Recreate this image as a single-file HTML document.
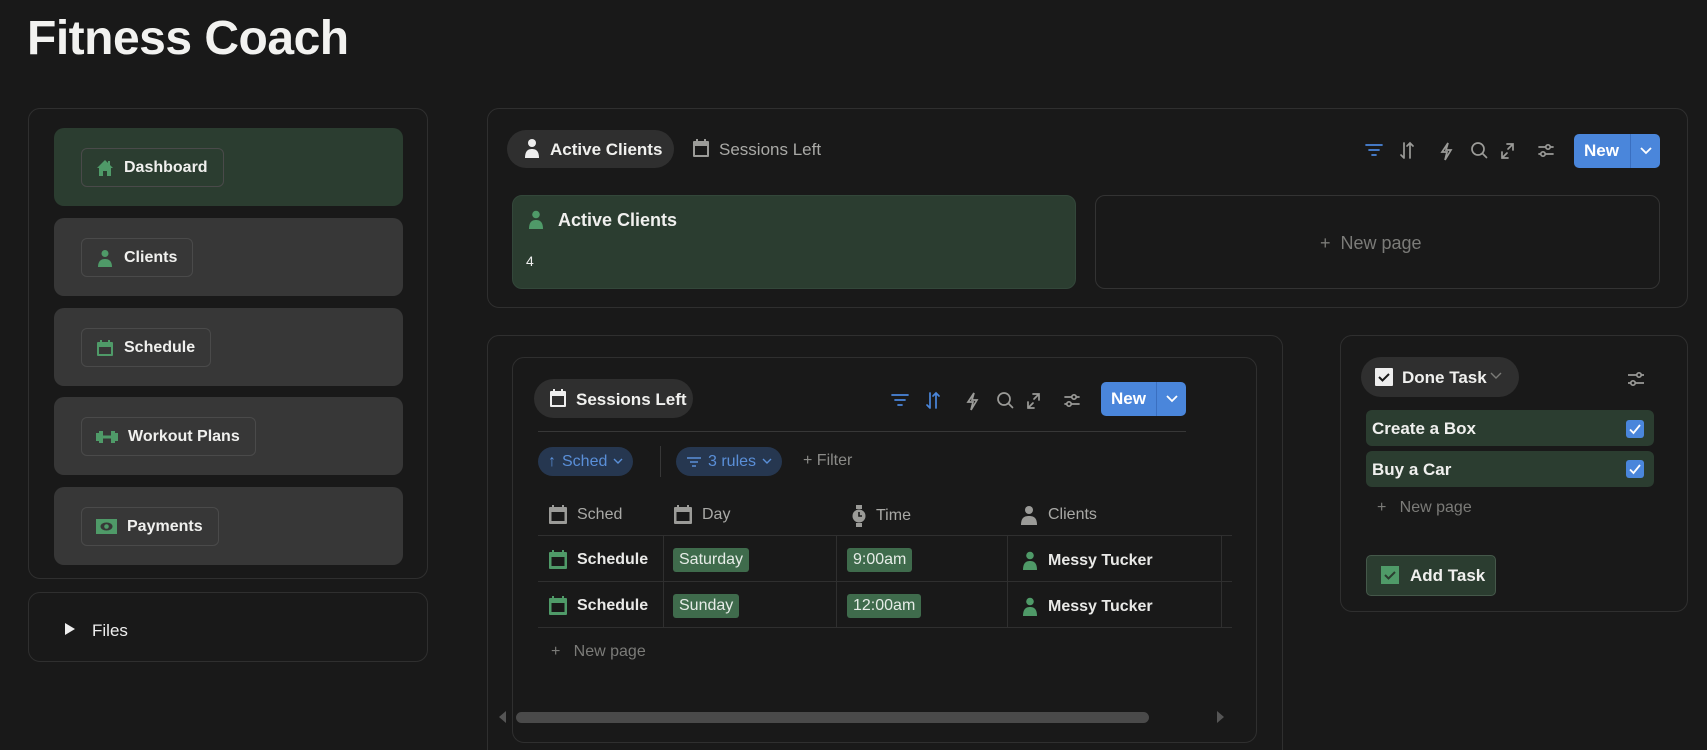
<!DOCTYPE html>
<html style="overflow:hidden;height:750px"><head><meta charset="utf-8"><style>
*{box-sizing:border-box;margin:0;padding:0}
body{width:1707px;height:750px;background:#191919;font-family:"Liberation Sans",sans-serif;color:#e9e9e7;position:relative;overflow:hidden}
#wrap{position:relative;width:1707px;height:750px;overflow:hidden}
.a{position:absolute}
.panel{position:absolute;border:1px solid #2f2f2f;border-radius:12px}
.nav{position:absolute;left:54px;width:349px;height:78px;background:#373737;border-radius:10px}
.nav.g{background:#2b3d30}
.pill{position:absolute;left:27px;top:20px;height:39px;border:1px solid #4a4a4a;border-radius:6px;display:flex;align-items:center;padding:0 15px 0 14px;font-weight:bold;font-size:16px;color:#f0f0ee;gap:10px}
.ic{display:inline-block}
.btn{position:absolute;background:#4a86db;border-radius:5px;color:#fff;font-weight:bold;font-size:17px;display:flex;align-items:center}
.chip{position:absolute;height:29px;border-radius:15px;background:#263750;color:#5a8fd8;font-size:16px;display:flex;align-items:center;padding:0 10px;gap:6px}
.tag{background:#3f6b4c;border-radius:3px;padding:3px 6px;font-size:16px;color:#e6ece7}
.th{position:absolute;top:505px;font-size:16px;color:#a9a9a6;display:flex;align-items:center;gap:10px}
.td{position:absolute;font-size:16px;display:flex;align-items:center;gap:10px}
</style></head><body><div id="wrap">
<div class="a" style="left:27px;top:11px;font-size:48px;font-weight:bold;color:#f2f2f0;letter-spacing:-0.5px">Fitness Coach</div>

<div class="panel" style="left:28px;top:108px;width:400px;height:471px"></div>
<div class="nav g" style="top:128px"><div class="pill"><svg class="ic" width="18" height="18" viewBox="0 0 18 18"><path d="M9 1L1 9h2v8h4v-5h4v5h4V9h2L9 1z" fill="#4f9a68"/><rect x="12" y="2" width="2" height="4" fill="#4f9a68"/></svg>Dashboard</div></div>
<div class="nav" style="top:218px"><div class="pill"><svg width="18" height="18" viewBox="0 0 18 18"><circle cx="9" cy="4.5" r="3.5" fill="#4f9a68"/><path d="M2 18c0-6 3-8 7-8s7 2 7 8z" fill="#4f9a68"/></svg>Clients</div></div>
<div class="nav" style="top:308px"><div class="pill"><svg width="18" height="18" viewBox="0 0 18 18"><rect x="1" y="3" width="16" height="14" rx="1" fill="#4f9a68"/><rect x="3" y="8" width="12" height="7" fill="#373737"/><rect x="4" y="1" width="2" height="3" fill="#4f9a68"/><rect x="12" y="1" width="2" height="3" fill="#4f9a68"/></svg>Schedule</div></div>
<div class="nav" style="top:397px"><div class="pill"><svg width="22" height="16" viewBox="0 0 22 16"><rect x="0" y="4" width="3" height="8" fill="#4f9a68"/><rect x="3" y="2" width="4" height="12" fill="#4f9a68"/><rect x="7" y="6.5" width="8" height="3" fill="#4f9a68"/><rect x="15" y="2" width="4" height="12" fill="#4f9a68"/><rect x="19" y="4" width="3" height="8" fill="#4f9a68"/></svg>Workout Plans</div></div>
<div class="nav" style="top:487px"><div class="pill"><svg width="21" height="15" viewBox="0 0 21 15"><rect x="0" y="0" width="21" height="15" fill="#4f9a68"/><ellipse cx="10.5" cy="7.5" rx="6" ry="4" fill="#373737"/><circle cx="10.5" cy="7.5" r="2.3" fill="#4f9a68"/></svg>Payments</div></div>

<div class="panel" style="left:28px;top:592px;width:400px;height:70px"></div>
<div class="a" style="left:65px;top:623px;width:0;height:0;border-left:10px solid #eee;border-top:6px solid transparent;border-bottom:6px solid transparent"></div>
<div class="a" style="left:92px;top:621px;font-size:17px;color:#eee">Files</div>

<div class="panel" style="left:487px;top:108px;width:1201px;height:200px"></div>
<div class="a" style="left:507px;top:130px;width:167px;height:38px;background:#2f2f2f;border-radius:19px"></div>
<svg class="a" style="left:523px;top:138px" width="18" height="20" viewBox="0 0 18 20"><circle cx="9" cy="5" r="4" fill="#eee"/><path d="M2 20c0-7 3-9 7-9s7 2 7 9z" fill="#eee"/></svg>
<div class="a" style="left:550px;top:140px;font-size:17px;font-weight:bold;color:#f0f0ee">Active Clients</div>
<svg class="a" style="left:692px;top:138px" width="18" height="20" viewBox="0 0 18 20"><rect x="1" y="3" width="16" height="16" rx="1" fill="#9b9b98"/><rect x="3" y="8" width="12" height="9" fill="#191919"/><rect x="4" y="1" width="2" height="3" fill="#9b9b98"/><rect x="12" y="1" width="2" height="3" fill="#9b9b98"/></svg>
<div class="a" style="left:719px;top:140px;font-size:17px;color:#a9a9a6">Sessions Left</div>

<svg class="a" style="left:1364px;top:140px" width="200" height="22" viewBox="0 0 200 22" fill="none" stroke-width="1.7" stroke-linecap="round">
<g stroke="#4a86db"><path d="M2 5h16M5 10h10M8 15h4"/></g>
<g stroke="#9b9b98"><path d="M40 3v15M37 15l3 3M43 6l3-3 3 3M46 3v15"/><path d="M84 3l-6 9h5l-2 8 6-10h-5z"/><circle cx="114" cy="9" r="6"/><path d="M118.5 13.5l4 4"/><path d="M143 4h6v6M149 4l-5 5M143 13l-5 5M138 12v6h6"/><path d="M175 7h14M175 14h14"/><circle cx="184" cy="7" r="2.2" fill="#191919"/><circle cx="179" cy="14" r="2.2" fill="#191919"/></g>
</svg>
<div class="btn" style="left:1574px;top:134px;width:86px;height:34px"><span style="padding-left:10px;width:56px">New</span><span style="border-left:1px solid #3a6fc0;height:34px;width:30px;display:flex;align-items:center;justify-content:center"><svg width="12" height="8" viewBox="0 0 12 8"><path d="M1 1l5 5 5-5" stroke="#fff" stroke-width="1.8" fill="none"/></svg></span></div>

<div class="a" style="left:512px;top:195px;width:564px;height:94px;background:#2b3d30;border:1px solid #33473a;border-radius:10px"></div>
<svg class="a" style="left:528px;top:210px" width="16" height="19" viewBox="0 0 16 19"><circle cx="8" cy="4.5" r="3.8" fill="#4f9a68"/><path d="M1 19c0-7 3-9 7-9s7 2 7 9z" fill="#4f9a68"/></svg>
<div class="a" style="left:558px;top:210px;font-size:18px;font-weight:bold;color:#f0f0ee">Active Clients</div>
<div class="a" style="left:526px;top:253px;font-size:14px;color:#eee">4</div>
<div class="a" style="left:1095px;top:195px;width:565px;height:94px;border:1px solid #333;border-radius:10px"></div>
<div class="a" style="left:1320px;top:233px;font-size:18px;color:#7b7b78">+&nbsp;&nbsp;New page</div>

<div class="panel" style="left:487px;top:335px;width:796px;height:430px"></div>
<div class="panel" style="left:512px;top:357px;width:745px;height:386px"></div>
<div class="a" style="left:534px;top:379px;width:159px;height:39px;background:#2f2f2f;border-radius:20px"></div>
<svg class="a" style="left:549px;top:388px" width="18" height="20" viewBox="0 0 18 20"><rect x="1" y="3" width="16" height="16" rx="1" fill="#eee"/><rect x="3" y="8" width="12" height="9" fill="#2f2f2f"/><rect x="4" y="1" width="2" height="3" fill="#eee"/><rect x="12" y="1" width="2" height="3" fill="#eee"/></svg>
<div class="a" style="left:576px;top:390px;font-size:17px;font-weight:bold;color:#f0f0ee">Sessions Left</div>
<svg class="a" style="left:890px;top:390px" width="200" height="22" viewBox="0 0 200 22" fill="none" stroke-width="1.7" stroke-linecap="round">
<g stroke="#4a86db"><path d="M2 5h16M5 10h10M8 15h4"/><path d="M40 3v15M37 15l3 3M43 6l3-3 3 3M46 3v15"/></g>
<g stroke="#9b9b98"><path d="M84 3l-6 9h5l-2 8 6-10h-5z"/><circle cx="114" cy="9" r="6"/><path d="M118.5 13.5l4 4"/><path d="M143 4h6v6M149 4l-5 5M143 13l-5 5M138 12v6h6"/><path d="M175 7h14M175 14h14"/><circle cx="184" cy="7" r="2.2" fill="#191919"/><circle cx="179" cy="14" r="2.2" fill="#191919"/></g>
</svg>
<div class="btn" style="left:1101px;top:382px;width:85px;height:34px"><span style="padding-left:10px;width:55px">New</span><span style="border-left:1px solid #3a6fc0;height:34px;width:30px;display:flex;align-items:center;justify-content:center"><svg width="12" height="8" viewBox="0 0 12 8"><path d="M1 1l5 5 5-5" stroke="#fff" stroke-width="1.8" fill="none"/></svg></span></div>
<div class="a" style="left:538px;top:431px;width:648px;height:1px;background:#373737"></div>

<div class="chip" style="left:538px;top:447px"><span>↑</span>Sched<svg width="10" height="7" viewBox="0 0 10 7"><path d="M1 1l4 4 4-4" stroke="#5a8fd8" stroke-width="1.4" fill="none"/></svg></div>
<div class="a" style="left:660px;top:446px;width:1px;height:31px;background:#373737"></div>
<div class="chip" style="left:676px;top:447px"><svg width="16" height="12" viewBox="0 0 16 12"><path d="M1 2h14M4 6h8M6 10h4" stroke="#5a8fd8" stroke-width="1.6"/></svg>3 rules<svg width="10" height="7" viewBox="0 0 10 7"><path d="M1 1l4 4 4-4" stroke="#5a8fd8" stroke-width="1.4" fill="none"/></svg></div>
<div class="a" style="left:803px;top:452px;font-size:16px;color:#8b8b88">+ Filter</div>

<div class="th" style="left:549px"><svg width="18" height="19" viewBox="0 0 18 19"><rect x="0" y="2" width="18" height="17" rx="1" fill="#9b9b98"/><rect x="2.5" y="7" width="13" height="9" fill="#191919"/><rect x="3" y="0" width="2" height="3" fill="#9b9b98"/><rect x="13" y="0" width="2" height="3" fill="#9b9b98"/></svg>Sched</div>
<div class="th" style="left:674px"><svg width="18" height="19" viewBox="0 0 18 19"><rect x="0" y="2" width="18" height="17" rx="1" fill="#9b9b98"/><rect x="2.5" y="7" width="13" height="9" fill="#191919"/><rect x="3" y="0" width="2" height="3" fill="#9b9b98"/><rect x="13" y="0" width="2" height="3" fill="#9b9b98"/></svg>Day</div>
<div class="th" style="left:852px"><svg width="14" height="22" viewBox="0 0 14 22"><rect x="4" y="0" width="6" height="4" fill="#9b9b98"/><rect x="4" y="18" width="6" height="4" fill="#9b9b98"/><circle cx="7" cy="11" r="6.5" fill="#9b9b98"/><path d="M7 7v4h3" stroke="#191919" stroke-width="1.6" fill="none"/></svg>Time</div>
<div class="th" style="left:1020px"><svg width="18" height="20" viewBox="0 0 18 20"><circle cx="9" cy="5" r="4" fill="#9b9b98"/><path d="M1 20c0-7 3-9 8-9s8 2 8 9z" fill="#9b9b98"/></svg>Clients</div>

<div class="a" style="left:538px;top:535px;width:694px;height:1px;background:#2f2f2f"></div>
<div class="a" style="left:538px;top:581px;width:694px;height:1px;background:#2f2f2f"></div>
<div class="a" style="left:538px;top:627px;width:694px;height:1px;background:#2f2f2f"></div>
<div class="a" style="left:663px;top:535px;width:1px;height:92px;background:#2f2f2f"></div>
<div class="a" style="left:836px;top:535px;width:1px;height:92px;background:#2f2f2f"></div>
<div class="a" style="left:1007px;top:535px;width:1px;height:92px;background:#2f2f2f"></div>
<div class="a" style="left:1221px;top:535px;width:1px;height:92px;background:#2f2f2f"></div>

<div class="td" style="left:549px;top:550px;font-weight:bold"><svg width="18" height="19" viewBox="0 0 18 19"><rect x="0" y="2" width="18" height="17" rx="1" fill="#4f9a68"/><rect x="2.5" y="7" width="13" height="9" fill="#191919"/><rect x="3" y="0" width="2" height="3" fill="#4f9a68"/><rect x="13" y="0" width="2" height="3" fill="#4f9a68"/></svg>Schedule</div>
<div class="td" style="left:549px;top:596px;font-weight:bold"><svg width="18" height="19" viewBox="0 0 18 19"><rect x="0" y="2" width="18" height="17" rx="1" fill="#4f9a68"/><rect x="2.5" y="7" width="13" height="9" fill="#191919"/><rect x="3" y="0" width="2" height="3" fill="#4f9a68"/><rect x="13" y="0" width="2" height="3" fill="#4f9a68"/></svg>Schedule</div>
<div class="td" style="left:673px;top:548px"><span class="tag">Saturday</span></div>
<div class="td" style="left:673px;top:594px"><span class="tag">Sunday</span></div>
<div class="td" style="left:847px;top:548px"><span class="tag">9:00am</span></div>
<div class="td" style="left:847px;top:594px"><span class="tag">12:00am</span></div>
<div class="td" style="left:1022px;top:551px;font-weight:bold"><svg width="16" height="19" viewBox="0 0 16 19"><circle cx="8" cy="4.5" r="3.8" fill="#4f9a68"/><path d="M1 19c0-7 3-9 7-9s7 2 7 9z" fill="#4f9a68"/></svg>Messy Tucker</div>
<div class="td" style="left:1022px;top:597px;font-weight:bold"><svg width="16" height="19" viewBox="0 0 16 19"><circle cx="8" cy="4.5" r="3.8" fill="#4f9a68"/><path d="M1 19c0-7 3-9 7-9s7 2 7 9z" fill="#4f9a68"/></svg>Messy Tucker</div>
<div class="a" style="left:551px;top:643px;font-size:16px;color:#7b7b78">+&nbsp;&nbsp;&nbsp;New page</div>

<div class="a" style="left:499px;top:711px;width:0;height:0;border-right:7px solid #555;border-top:6px solid transparent;border-bottom:6px solid transparent"></div>
<div class="a" style="left:516px;top:712px;width:633px;height:11px;background:#4a4a4a;border-radius:6px"></div>
<div class="a" style="left:1217px;top:711px;width:0;height:0;border-left:7px solid #555;border-top:6px solid transparent;border-bottom:6px solid transparent"></div>

<div class="panel" style="left:1340px;top:335px;width:348px;height:277px"></div>
<div class="a" style="left:1361px;top:357px;width:158px;height:40px;background:#2f2f2f;border-radius:20px"></div>
<svg class="a" style="left:1375px;top:368px" width="18" height="18" viewBox="0 0 18 18"><rect width="18" height="18" rx="1" fill="#eee"/><path d="M4 9l3.5 3.5L14 6" stroke="#191919" stroke-width="2" fill="none"/></svg>
<div class="a" style="left:1402px;top:368px;font-size:17px;font-weight:bold;color:#f0f0ee">Done Task</div>
<svg class="a" style="left:1490px;top:372px" width="12" height="8" viewBox="0 0 12 8"><path d="M1 1l5 5 5-5" stroke="#7b7b78" stroke-width="1.4" fill="none"/></svg>
<svg class="a" style="left:1627px;top:370px" width="18" height="18" viewBox="0 0 18 18" fill="none" stroke="#9b9b98" stroke-width="1.7"><path d="M1 5h16M1 13h16"/><circle cx="12" cy="5" r="2.2" fill="#191919"/><circle cx="6" cy="13" r="2.2" fill="#191919"/></svg>
<div class="a" style="left:1366px;top:410px;width:288px;height:36px;background:#2b3d30;border-radius:6px"></div>
<div class="a" style="left:1372px;top:419px;font-size:17px;font-weight:bold;color:#f0f0ee">Create a Box</div>
<svg class="a" style="left:1626px;top:420px" width="18" height="18" viewBox="0 0 18 18"><rect width="18" height="18" rx="3" fill="#4a86db"/><path d="M4 9.5l3.5 3.5L14 5" stroke="#fff" stroke-width="1.8" fill="none"/></svg>
<div class="a" style="left:1366px;top:451px;width:288px;height:36px;background:#2b3d30;border-radius:6px"></div>
<div class="a" style="left:1372px;top:460px;font-size:17px;font-weight:bold;color:#f0f0ee">Buy a Car</div>
<svg class="a" style="left:1626px;top:460px" width="18" height="18" viewBox="0 0 18 18"><rect width="18" height="18" rx="3" fill="#4a86db"/><path d="M4 9.5l3.5 3.5L14 5" stroke="#fff" stroke-width="1.8" fill="none"/></svg>
<div class="a" style="left:1377px;top:499px;font-size:16px;color:#7b7b78">+&nbsp;&nbsp;&nbsp;New page</div>
<div class="a" style="left:1366px;top:555px;width:130px;height:41px;background:#2b3d30;border:1px solid #45584a;border-radius:5px"></div>
<svg class="a" style="left:1381px;top:566px" width="18" height="18" viewBox="0 0 18 18"><rect width="18" height="18" fill="#4f9a68"/><path d="M4 9l3.5 3.5L14 6" stroke="#2b3d30" stroke-width="2" fill="none"/></svg>
<div class="a" style="left:1410px;top:566px;font-size:17px;font-weight:bold;color:#f0f0ee">Add Task</div>
</div></body></html>
